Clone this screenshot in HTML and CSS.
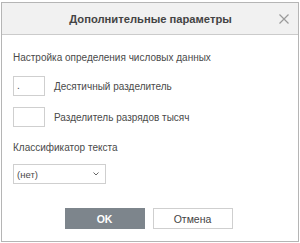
FILE: index.html
```html
<!DOCTYPE html>
<html lang="ru">
<head>
    <meta charset="UTF-8">
    <title>Дополнительные параметры</title>
    <link rel="stylesheet" href="styles.css">
</head>
<body>
    <div class="dialog">
        <div class="dialog-header">
            <span class="dialog-title">Дополнительные параметры</span>
            <span class="close">
                <svg width="10" height="10" viewBox="0 0 10 10"><path d="M0.5 0.5 L9.5 9.5 M9.5 0.5 L0.5 9.5" stroke="#9a9a9a" stroke-width="1.2" fill="none"/></svg>
            </span>
        </div>
        <div class="dialog-body">
            <div class="section-label">Настройка определения числовых данных</div>
            <div class="field-row">
                <div class="small-input">.</div>
                <span class="field-label">Десятичный разделитель</span>
            </div>
            <div class="field-row">
                <div class="small-input"></div>
                <span class="field-label">Разделитель разрядов тысяч</span>
            </div>
            <div class="section-label qualifier">Классификатор текста</div>
            <div class="select">
                <span>(нет)</span>
                <svg width="6" height="4" viewBox="0 0 6 4"><path d="M0.5 0.5 L3 3 L5.5 0.5" stroke="#666" stroke-width="1" fill="none"/></svg>
            </div>
        </div>
        <div class="dialog-footer">
            <button class="btn btn-primary">OK</button>
            <button class="btn">Отмена</button>
        </div>
    </div>
</body>
</html>
```

FILE: styles.css
```css
body {
    margin: 0;
    padding: 0;
    background: #ffffff;
    font-family: 'Liberation Sans', Arial, sans-serif;
    font-size: 10px;
    color: #4a4a4a;
}
.dialog {
    margin: 2px 1px 0 1px;
    width: 296px;
    height: 238px;
    border: 1px solid #b5b5b5;
    background: #ffffff;
    display: flex;
    flex-direction: column;
}
.dialog-header {
    height: 31px;
    background: #f1f1f1;
    border-bottom: 1px solid #cbcbcb;
    display: flex;
    align-items: center;
    justify-content: center;
    position: relative;
}
.dialog-title {
    font-size: 11.2px;
    font-weight: bold;
    color: #444;
    margin-left: 1px;
}
.close {
    position: absolute;
    right: 9px;
    top: 11px;
    width: 10px;
    height: 10px;
    display: flex;
}
.dialog-body {
    padding: 16px 11px 0 11px;
    flex: 1;
}
.section-label {
    line-height: 14px;
    margin-bottom: 11px;
}
.field-row {
    display: flex;
    align-items: center;
    gap: 9px;
    margin-bottom: 11px;
}
.field-label {
    font-size: 10px;
}
.small-input {
    height: 18px;
    border: 1px solid #cfcfcf;
    font-size: 10px;
    line-height: 18px;
    padding-left: 3px;
    width: 27px;
}
.qualifier {
    margin-top: 14px;
    margin-bottom: 9px;
}
.select {
    height: 18px;
    border: 1px solid #cfcfcf;
    display: flex;
    align-items: center;
    justify-content: space-between;
    padding: 0 6px 0 3px;
    width: 82px;
    font-size: 9.5px;
}
.dialog-footer {
    display: flex;
    justify-content: center;
    gap: 8px;
    padding-bottom: 12px;
    padding-right: 3px;
}
.btn {
    width: 80px;
    height: 21px;
    border: 1px solid #cfcfcf;
    background: #ffffff;
    color: #444;
    font-family: 'Liberation Sans', Arial, sans-serif;
    font-size: 10.5px;
    padding: 0;
}
.btn-primary {
    background: #7d858c;
    border-color: #7d858c;
    color: #ffffff;
    font-weight: bold;
}
```
